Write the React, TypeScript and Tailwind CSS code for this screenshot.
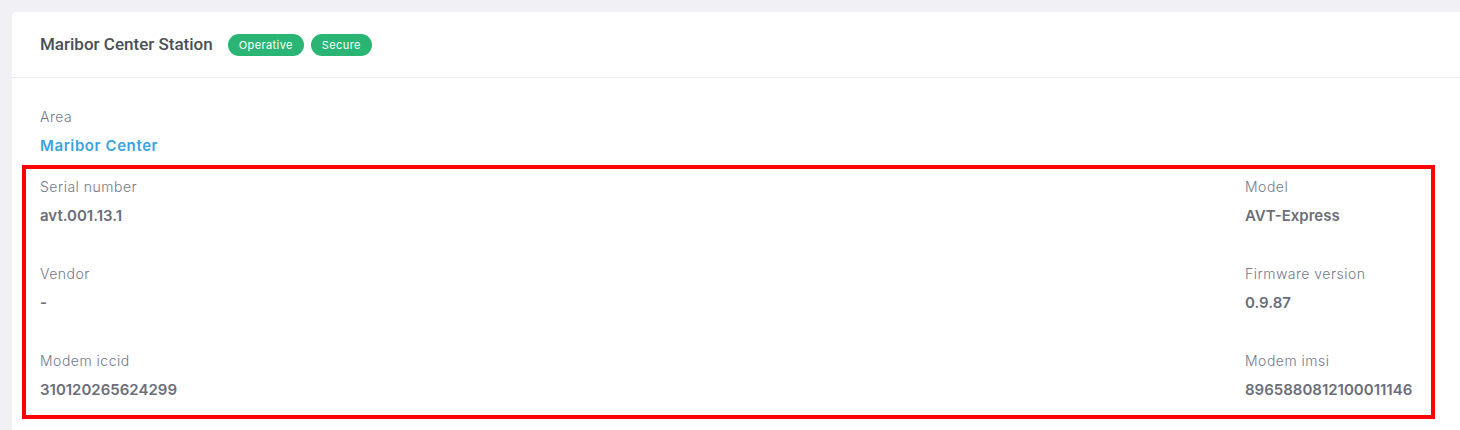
const fields: { label: string; value: string }[][] = [
  [
    { label: "Serial number", value: "avt.001.13.1" },
    { label: "Model", value: "AVT-Express" },
  ],
  [
    { label: "Vendor", value: "-" },
    { label: "Firmware version", value: "0.9.87" },
  ],
  [
    { label: "Modem iccid", value: "310120265624299" },
    { label: "Modem imsi", value: "8965880812100011146" },
  ],
];

function Field({ label, value, blue }: { label: string; value: string; blue?: boolean }) {
  return (
    <div className="flex flex-col">
      <span className="text-[14px] leading-[20px] font-light tracking-[0.5px] text-[#74788d]">{label}</span>
      <span
        className={
          blue
            ? "mt-[9px] text-[15px] leading-[20px] font-semibold tracking-[0.6px] text-[#3aa3e0]"
            : "mt-[9px] text-[15px] leading-[20px] font-semibold text-[#6b6e7a]"
        }
      >
        {value}
      </span>
    </div>
  );
}

export default function App() {
  return (
    <div
      className="h-[430px] w-[1460px] overflow-hidden bg-[#f0f0f5] pl-[12px] pt-[12px]"
      style={{ fontFamily: "Inter, 'Noto Sans', sans-serif" }}
    >
      <div className="h-[440px] w-[1460px] rounded-l-[4px] bg-white">
        <div className="flex h-[66px] items-center gap-[15px] border-b border-[#e9e9ef] pl-[28px] pt-[1px]">
          <h2 className="text-[17px] font-medium text-[#495057]" style={{ fontFamily: "Roboto, sans-serif" }}>
            Maribor Center Station
          </h2>
          <div className="flex gap-[7px]">
            <span className="flex h-[22px] items-center rounded-full bg-[#2ab574] px-[11px] text-[11px] tracking-[0.4px] text-white">
              Operative
            </span>
            <span className="flex h-[22px] items-center rounded-full bg-[#2ab574] px-[11px] text-[11px] tracking-[0.4px] text-white">
              Secure
            </span>
          </div>
        </div>

        <div className="pl-[28px] pt-[29px]">
          <Field label="Area" value="Maribor Center" blue />
        </div>

        <div className="relative mt-[9px] h-[254px] w-[1423px] pl-[28px]">
          <div className="absolute left-[10px] top-0 h-[254px] w-[1413px] border-[4px] border-[#ff0000]" />
          <div className="flex flex-col gap-[38px] pt-[12px]">
            {fields.map((row, i) => (
              <div key={i} className="flex">
                <div className="w-[1205px]">
                  <Field {...row[0]} />
                </div>
                <Field {...row[1]} />
              </div>
            ))}
          </div>
        </div>
      </div>
    </div>
  );
}
